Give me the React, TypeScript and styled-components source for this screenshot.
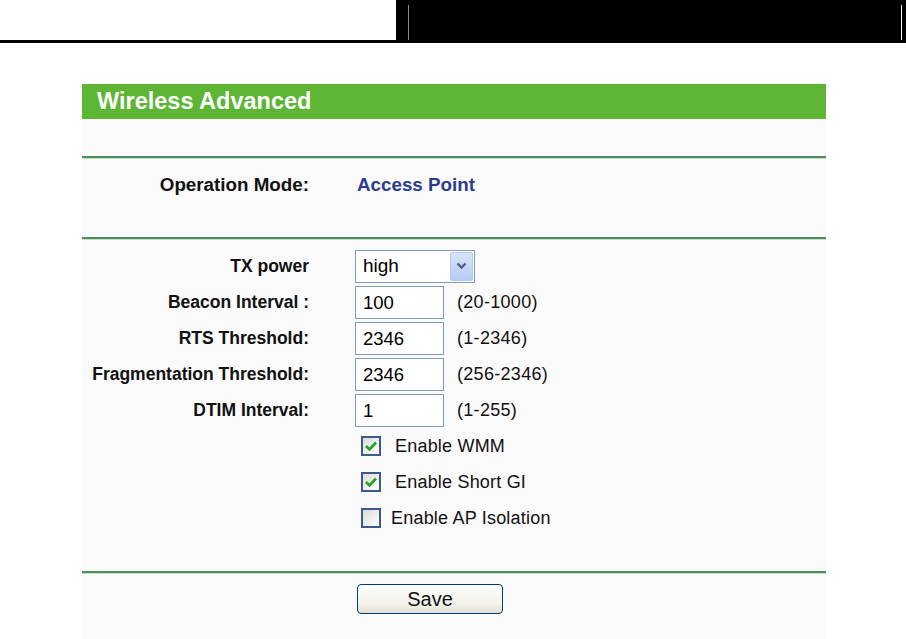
import styled, { createGlobalStyle } from "styled-components";

const GlobalStyle = createGlobalStyle`
  html, body {
    margin: 0;
    padding: 0;
    background: #ffffff;
    font-family: "Liberation Sans", Arial, sans-serif;
    overflow: hidden;
  }
`;

const TopBar = styled.div`
  display: flex;
  height: 40px;
  border-bottom: 3px solid #000;
`;

const TopBlank = styled.div`
  width: 396px;
`;

const TopBlack = styled.div`
  flex: 1;
  background: #000;
  display: flex;
  justify-content: space-between;
  padding: 5px 4px 0 12px;
`;

const Rule = styled.div<{ $color: string }>`
  width: 1px;
  background: ${({ $color }) => $color};
`;

const Panel = styled.div`
  margin: 41px 0 0 82px;
  width: 744px;
  background: #fafafa;
  min-height: 560px;
`;

const Title = styled.div`
  height: 35px;
  background: #5cb634;
  color: #fff;
  font-weight: bold;
  font-size: 23.5px;
  line-height: 35px;
  padding-left: 15px;
`;

const Section = styled.div<{ $pad: string }>`
  padding: ${({ $pad }) => $pad};
`;

const Divider = styled.div`
  height: 2px;
  background: #4f8a5c;
  border-bottom: 1px solid #c3dfc7;
`;

const Grid = styled.div`
  display: grid;
  grid-template-columns: 228px 1fr;
  column-gap: 45px;
  grid-auto-rows: 36px;
  align-items: center;
`;

const Label = styled.div<{ $big?: boolean }>`
  text-align: right;
  font-weight: bold;
  font-size: ${({ $big }) => ($big ? "18.8px" : "17.5px")};
  color: #111;
  white-space: nowrap;
  padding-right: 1px;
`;

const ModeValue = styled.div`
  font-weight: bold;
  font-size: 18.8px;
  color: #2b3d8f;
  padding-left: 2px;
`;

const Field = styled.div`
  display: flex;
  align-items: center;
  gap: 13px;
  font-size: 18px;
  letter-spacing: 0.3px;
  color: #111;
`;

const TextBox = styled.div`
  box-sizing: border-box;
  width: 89px;
  height: 33px;
  border: 1px solid #7f9db9;
  background: #fff;
  font-size: 18.5px;
  letter-spacing: 0;
  line-height: 31px;
  padding-left: 7px;
  color: #000;
`;

const Select = styled.div`
  box-sizing: border-box;
  width: 120px;
  height: 33px;
  border: 1px solid #7f9db9;
  background: #fff;
  display: flex;
  align-items: center;
  justify-content: space-between;
  padding: 1px 1px 1px 7px;
  font-size: 19px;
  letter-spacing: 0;
  color: #000;
`;

const SelectArrow = styled.div`
  width: 23px;
  height: 29px;
  border-radius: 2px;
  background: linear-gradient(#d8e4fc, #b8cbf5);
  border: 1px solid #b5c8f0;
  box-sizing: border-box;
  display: flex;
  align-items: center;
  justify-content: center;
`;

const CheckRow = styled.label<{ $gap: number }>`
  display: flex;
  align-items: center;
  gap: ${({ $gap }) => $gap}px;
  padding-left: 6px;
  font-size: 18px;
  letter-spacing: 0.2px;
  color: #111;
`;

const Box = styled.span`
  box-sizing: border-box;
  width: 20px;
  height: 20px;
  border: 2px solid #3a5a8c;
  background: linear-gradient(135deg, #dcdcd4, #ffffff);
  display: flex;
  align-items: center;
  justify-content: center;
`;

const SaveButton = styled.button`
  width: 146px;
  height: 30px;
  margin-left: 2px;
  border: 1px solid #003c74;
  border-radius: 4px;
  background: linear-gradient(#ffffff, #f2f1ea 70%, #e2dfd2);
  font-family: "Liberation Sans", Arial, sans-serif;
  font-size: 20px;
  color: #111;
  padding: 0;
`;

const Tick = () => (
  <svg width="14" height="12" viewBox="0 0 14 12">
    <path d="M2 6 L5.5 9.5 L12 2.5" fill="none" stroke="#21a121" strokeWidth="2.6" />
  </svg>
);

const numberRows = [
  { label: "Beacon Interval :", value: "100", range: "(20-1000)" },
  { label: "RTS Threshold:", value: "2346", range: "(1-2346)" },
  { label: "Fragmentation Threshold:", value: "2346", range: "(256-2346)" },
  { label: "DTIM Interval:", value: "1", range: "(1-255)" },
];

const checks = [
  { label: "Enable WMM", on: true, gap: 14 },
  { label: "Enable Short GI", on: true, gap: 14 },
  { label: "Enable AP Isolation", on: false, gap: 10 },
];

export default function App() {
  return (
    <>
      <GlobalStyle />
      <TopBar>
        <TopBlank />
        <TopBlack>
          <Rule $color="#8a8a8a" />
          <Rule $color="#ffffff" />
        </TopBlack>
      </TopBar>
      <Panel>
        <Title>Wireless Advanced</Title>
        <Section $pad="37px 0 0" />
        <Divider />
        <Section $pad="8px 0 34px">
          <Grid>
            <Label $big>Operation Mode:</Label>
            <ModeValue>Access Point</ModeValue>
          </Grid>
        </Section>
        <Divider />
        <Section $pad="8px 0 35px">
          <Grid>
            <Label>TX power</Label>
            <Field>
              <Select>
                high
                <SelectArrow>
                  <svg width="11" height="8" viewBox="0 0 11 8">
                    <path d="M1.5 1.5 L5.5 5.5 L9.5 1.5" fill="none" stroke="#4d6185" strokeWidth="2.4" />
                  </svg>
                </SelectArrow>
              </Select>
            </Field>
            {numberRows.map((r) => (
              <>
                <Label key={r.label}>{r.label}</Label>
                <Field key={r.label + "f"}>
                  <TextBox>{r.value}</TextBox>
                  {r.range}
                </Field>
              </>
            ))}
            {checks.map((c) => (
              <>
                <div key={c.label + "s"} />
                <CheckRow key={c.label} $gap={c.gap}>
                  <Box>{c.on && <Tick />}</Box>
                  {c.label}
                </CheckRow>
              </>
            ))}
          </Grid>
        </Section>
        <Divider />
        <Section $pad="7px 0 0">
          <Grid>
            <div />
            <div>
              <SaveButton>Save</SaveButton>
            </div>
          </Grid>
        </Section>
      </Panel>
    </>
  );
}
